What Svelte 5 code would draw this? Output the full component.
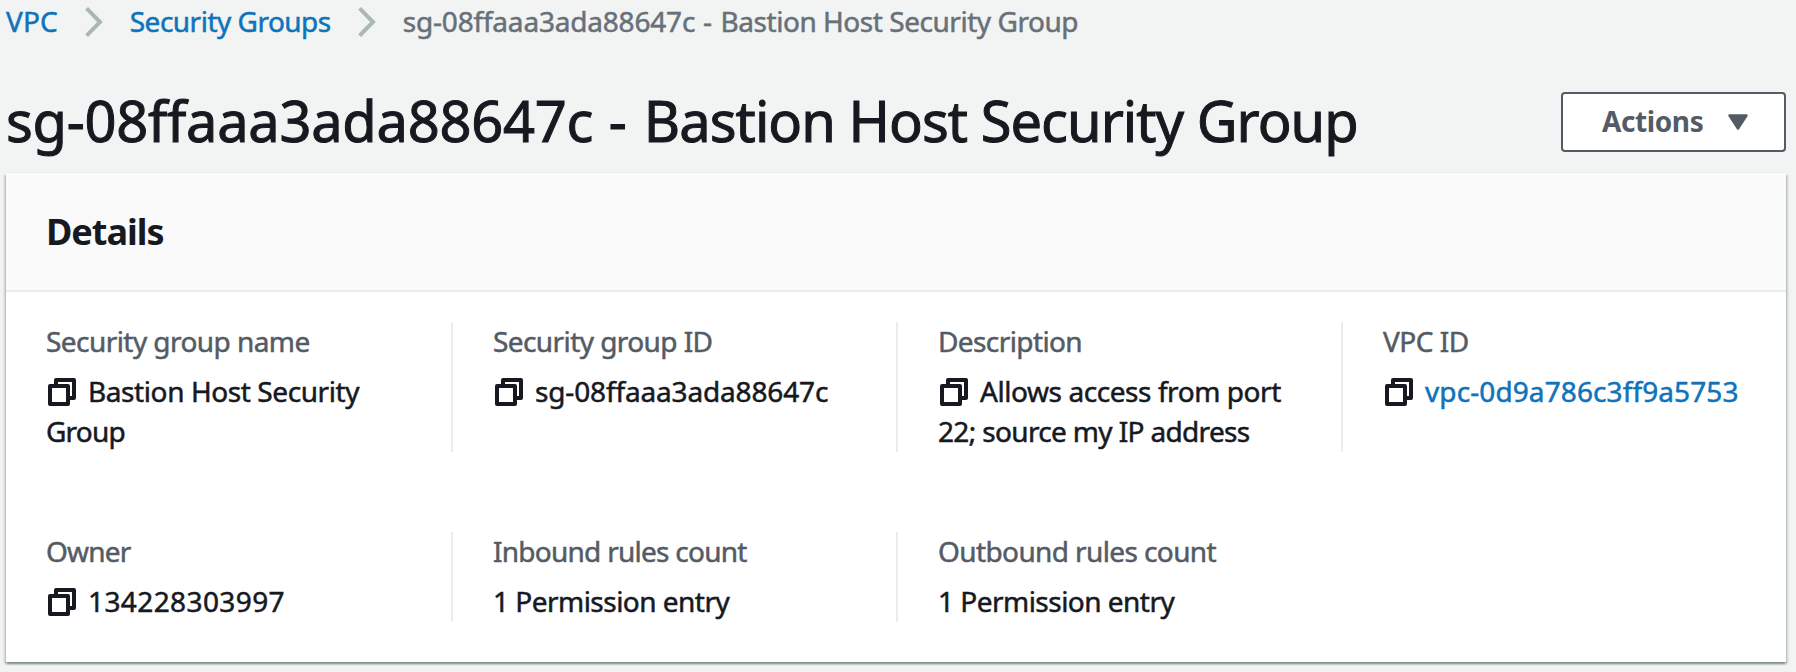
<script>
  const crumbs = [
    { parts: [['VPC', 0.1]], link: true },
    { parts: [['Security Groups', -0.51]], link: true },
    { parts: [['sg-08ffaaa3ada88647c', -0.19], [' - ', 0.6], ['Bastion Host Security Group', -0.46]], link: false }
  ];

  const title = [['sg-08ffaaa3ada88647c', -0.27], [' - ', 1.2], ['Bastion Host Security Group', -0.96]];

  const fields = [
    { label: 'Security group name', labelTrack: -0.56, copy: true, lines: [['Bastion Host Security', -0.41], ['Group', -0.8]] },
    { label: 'Security group ID', labelTrack: -0.58, copy: true, lines: [['sg-08ffaaa3ada88647c', -0.15]] },
    { label: 'Description', labelTrack: -0.6, copy: true, lines: [['Allows access from port', -0.43], ['22; source my IP address', -0.65]] },
    { label: 'VPC ID', labelTrack: -0.5, copy: true, link: true, lines: [['vpc-0d9a786c3ff9a5753', 0.1]] },
    { label: 'Owner', labelTrack: -0.8, copy: true, lines: [['134228303997', 0.4]] },
    { label: 'Inbound rules count', labelTrack: -0.74, lines: [['1 Permission entry', -0.52]] },
    { label: 'Outbound rules count', labelTrack: -0.61, lines: [['1 Permission entry', -0.52]] }
  ];
</script>

<main>
  <nav>
    {#each crumbs as c, i}
      {#if i > 0}
        <svg class="chevron" width="18" height="30" viewBox="0 0 18 30"><path d="M1.6 1.4 15 15 1.6 28.6" /></svg>
      {/if}
      <div class="crumb" class:link={c.link}>{#each c.parts as [text, track]}<span style="letter-spacing: {track}px">{text}</span>{/each}</div>
    {/each}
  </nav>

  <header>
    <h1>{#each title as [text, track]}<span style="letter-spacing: {track}px">{text}</span>{/each}</h1>
    <button>
      <span>Actions</span>
      <svg width="20" height="16" viewBox="0 0 20 16"><path d="M1.5 1.5h17L10 14.5z" /></svg>
    </button>
  </header>

  <section>
    <div class="head"><h2>Details</h2></div>
    <div class="grid">
      {#each fields as f, i}
        <div class="cell" class:first={i % 4 === 0}>
          <div class="label" style="letter-spacing: {f.labelTrack}px">{f.label}</div>
          {#each f.lines as [text, track], n}
            <div class="value">
              {#if f.copy && n === 0}
                <svg class="copy" width="28" height="28" viewBox="0 0 28 28"><path d="M8 6V2H26V20H22M2 8H20V26H2z" /></svg>
              {/if}
              <span class:link={f.link} style="letter-spacing: {track}px">{text}</span>
            </div>
          {/each}
        </div>
      {/each}
    </div>
  </section>
</main>

<style>
  :global(body) {
    background: #f2f3f3;
    overflow: hidden;
  }
  main {
    box-sizing: border-box;
    height: 672px;
    padding: 0 10px 0 6px;
    background: #f2f4f3;
    font: 400 28px/40px 'Noto Sans', sans-serif;
    color: #16191f;
    white-space: nowrap;
    -webkit-text-stroke: 0.5px currentColor;
  }
  nav {
    display: flex;
    align-items: center;
    height: 44px;
    color: #687078;
  }
  .crumb {
    margin-top: -2px;
    white-space: pre;
  }
  .link {
    color: #0f73bb;
  }
  .chevron {
    margin: 0 27px;
    fill: none;
    stroke: #aab7b8;
    stroke-width: 4;
  }
  header {
    display: flex;
    align-items: center;
    justify-content: space-between;
    height: 129px;
  }
  h1 {
    margin: 0;
    padding-top: 22px;
    font-weight: 400;
    font-size: 56px;
    line-height: 80px;
    white-space: pre;
    -webkit-text-stroke: 1px currentColor;
  }
  button {
    box-sizing: border-box;
    display: flex;
    align-items: center;
    gap: 25px;
    width: 225px;
    height: 60px;
    margin: 27px 0 0;
    padding: 0 0 0 39px;
    border: 2px solid #545b64;
    border-radius: 4px;
    background: #fff;
    color: #545b64;
    font: 700 28px/40px 'Noto Sans', sans-serif;
    letter-spacing: -0.4px;
    -webkit-text-stroke: 0;
  }
  button span {
    margin-top: -2px;
  }
  button svg {
    fill: #545b64;
    stroke: #545b64;
    stroke-width: 2.4;
    stroke-linejoin: round;
  }
  section {
    width: 1780px;
    background: #fff;
    box-shadow: 0 2px 2px 0 rgba(0, 28, 36, 0.3), 2px 2px 2px 0 rgba(0, 28, 36, 0.15), -2px 2px 2px 0 rgba(0, 28, 36, 0.15), 0 -1px 0 0 #eaeded;
  }
  .head {
    box-sizing: border-box;
    display: flex;
    align-items: center;
    height: 119px;
    padding: 0 40px;
    border-bottom: 2px solid #eaeded;
    background: #fafafa;
  }
  h2 {
    margin: 0;
    font-size: 36px;
    line-height: 44px;
    font-weight: 700;
    letter-spacing: -1px;
    -webkit-text-stroke: 0;
  }
  .grid {
    display: grid;
    grid-template-columns: repeat(4, 445px);
    row-gap: 80px;
    padding: 30px 0 40px;
  }
  .cell {
    border-left: 2px solid #eaeded;
    padding-left: 40px;
  }
  .cell.first {
    border-left: 0;
  }
  .label {
    height: 40px;
    margin-bottom: 10px;
    line-height: 38px;
    color: #545b64;
  }
  .value {
    display: flex;
    align-items: center;
    height: 40px;
  }
  .value span {
    margin-top: -2px;
  }
  .copy {
    margin: 0 12px 0 2px;
    fill: none;
    stroke: #16191f;
    stroke-width: 4;
    stroke-linejoin: round;
  }
</style>
